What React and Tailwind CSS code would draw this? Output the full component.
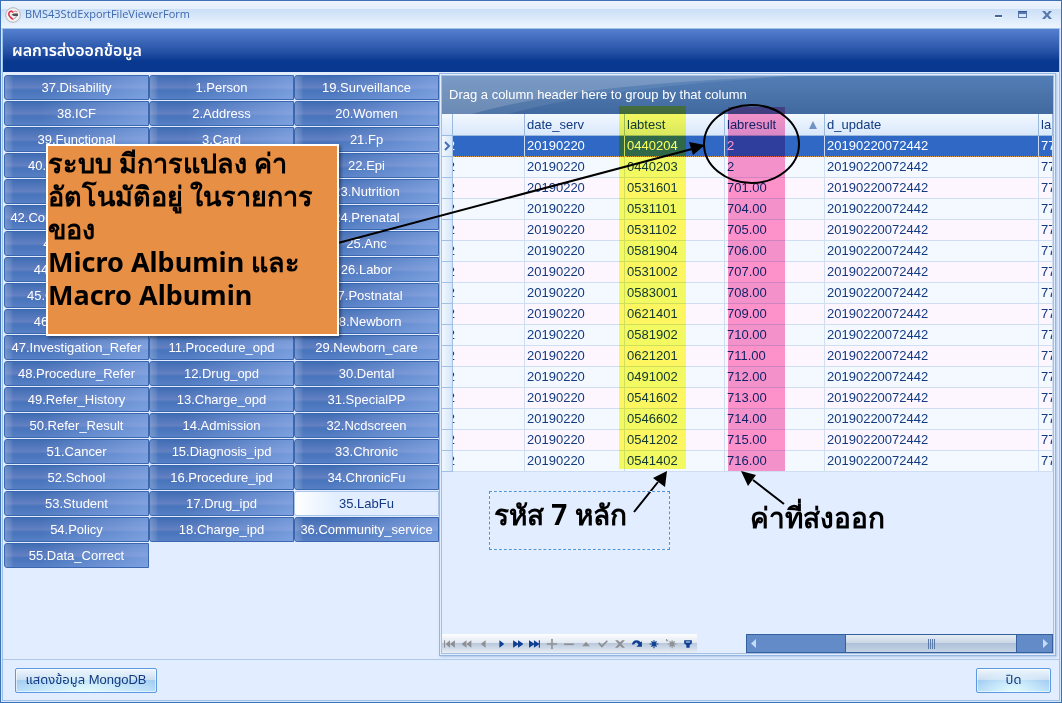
import React from "react";

const columns = [
  [
    "37.Disability", "38.ICF", "39.Functional", "40.Rehabilitation", "41.Village",
    "42.Community_Activity", "43.Provider", "44.Care_Refer", "45.Clinical_Refer",
    "46.Drug_Refer", "47.Investigation_Refer", "48.Procedure_Refer", "49.Refer_History",
    "50.Refer_Result", "51.Cancer", "52.School", "53.Student", "54.Policy", "55.Data_Correct",
  ],
  [
    "1.Person", "2.Address", "3.Card", "4.Death", "5.Drugallergy", "6.Home", "7.Village",
    "8.Service", "9.Appointment", "10.Diagnosis_opd", "11.Procedure_opd", "12.Drug_opd",
    "13.Charge_opd", "14.Admission", "15.Diagnosis_ipd", "16.Procedure_ipd", "17.Drug_ipd",
    "18.Charge_ipd",
  ],
  [
    "19.Surveillance", "20.Women", "21.Fp", "22.Epi", "23.Nutrition", "24.Prenatal", "25.Anc",
    "26.Labor", "27.Postnatal", "28.Newborn", "29.Newborn_care", "30.Dental", "31.SpecialPP",
    "32.Ncdscreen", "33.Chronic", "34.ChronicFu", "35.LabFu", "36.Community_service",
  ],
];

const rows = [
  ["0440204", "2"], ["0440203", "2"], ["0531601", "701.00"], ["0531101", "704.00"],
  ["0531102", "705.00"], ["0581904", "706.00"], ["0531002", "707.00"], ["0583001", "708.00"],
  ["0621401", "709.00"], ["0581902", "710.00"], ["0621201", "711.00"], ["0491002", "712.00"],
  ["0541602", "713.00"], ["0546602", "714.00"], ["0541202", "715.00"], ["0541402", "716.00"],
];

const navIcons = [
  ["First record", false, <path d="M0 2h1v7H0zM5.500 2v7L2 6V5zM10 2v7L6 6V5z" />],
  ["Previous page", false, <path d="M5 2v7L1 6V5zM9.500 2v7L5.500 6V5z" />],
  ["Previous record", false, <path d="M7 2v7L3 6V5z" />],
  ["Next record", true, <path d="M4 2v7L8 6V5z" />],
  ["Next page", true, <path d="M1 2v7L5.500 6V5zM5.500 2v7L10 6V5z" />],
  ["Last record", true, <path d="M0 2v7L4.500 6V5zM4.500 2v7L9 6V5zM9 2h1v7H9z" />],
  ["Insert", false, <path d="M1 5h4V1h1v4h4v1H6v4H5V6H1z" stroke="#8e9093" strokeWidth=".5" />],
  ["Delete", false, <path d="M1 5h9v1.500H1z" />],
  ["Edit", false, <path d="M2 7.500L5.500 3.500 9 7.500z" />],
  ["Post", false, <path d="M1 5l1-1 2.500 2.500L9 2l1 1-5.500 6z" />],
  ["Cancel", false, <path d="M1 2h2.500l2 2 2-2H10L6.800 5.500 10 9H7.500l-2-2-2 2H1l3.200-3.500z" />],
  ["Refresh", true, <path d="M1 6C1 1 8 1 8.500 4L10 3v5H5l1.800-1.700C6 3.500 3.500 4 3 6z" />],
  ["Save bookmark", true, <path d="M5 2h1v2l1.500-1.200.7.700L7 5h2.500v1H7l1.200 1.500-.7.700L6 7v2.500H5V7L3.500 8.200l-.7-.7L4 6H1.500V5H4L2.800 3.500l.7-.7L5 4z" />],
  ["Go to bookmark", false, <path d="M1 1h1v1h1v1H1zM6 2h1v2l1.500-1.200.7.700L8 5h2.500v1H8l1.200 1.500-.7.700L7 7v2.500H6V7L4.500 8.200l-.7-.7L5 6H2.500V5H5L3.800 3.500l.7-.7L6 4z" />],
  ["Filter", true, <path fillRule="evenodd" d="M2 2h7v3L7 6.500V9H4V6.500L2 5zM3.500 3.200v1h4v-1z" />],
];

function Tab({ name }) {
  const selected = name === "35.LabFu";
  return (
    <button
      type="button"
      aria-pressed={selected}
      className={
        "h-[25px] shrink-0 overflow-hidden whitespace-nowrap rounded-l-[3px] border pt-px text-center text-[13px] leading-[22px] " +
        (selected
          ? "border-[#a9c5e8] bg-linear-to-r from-white to-[#e2eeff] to-30% text-[#123a80]"
          : "border-[#3a67af] bg-[linear-gradient(90deg,#ffffff38_0,#ffffff18_4%,transparent_6%,transparent_25%,#aac8ff78_100%),linear-gradient(180deg,#406db4_0%,#6280c2_50%,#4874bc_62%,#567fc4_100%)] text-white")
      }
    >
      {name}
    </button>
  );
}

function TitleBar() {
  return (
    <div className="flex h-[27px] shrink-0 items-center bg-[linear-gradient(180deg,#edf4fe_0,#e4effc_8px,#cbdff7_8px,#edf5fe_100%)] pl-1 pr-2">
      <svg viewBox="0 0 16 16" className="size-4" aria-hidden="true">
        <circle cx="8" cy="8" r="7.300" fill="#f3f3f4" stroke="#b4b4b8" />
        <path d="M8 5.500C6.500 3 3.500 4.500 3.800 7.500c.2 2 1.700 3 4.200 5" fill="none" stroke="#e0304a" strokeWidth="1.600" />
        <path d="M8 5.500C9 4 11 3.800 12 5" fill="none" stroke="#e58a98" strokeWidth="1.200" />
        <path d="M8 12.500C10 11 11.500 10 12 8.500" fill="none" stroke="#b0b0b4" strokeWidth="1.200" />
        <path d="M6.500 8l2-1.500H13v2.500H9z" fill="#4f4f55" />
      </svg>
      <span className="ml-1 grow font-['Open_Sans',sans-serif] text-[11px] text-[#3d69ad]">BMS43StdExportFileViewerForm</span>
      <div className="flex items-center gap-3">
        <button type="button" aria-label="Minimize" className="h-3 w-3">
          <svg viewBox="0 0 12 12" className="size-3"><path d="M2 6h7v2H2z" fill="#45679d" /><path d="M2 8h7v1H2z" fill="#fff" /></svg>
        </button>
        <button type="button" aria-label="Maximize" className="h-3 w-3">
          <svg viewBox="0 0 12 12" className="size-3"><path fillRule="evenodd" d="M1 2h9v7H1zM2 5v3h7V5z" fill="#5678ac" /><path d="M1 2h9v1H1z" fill="#35568e" /></svg>
        </button>
        <button type="button" aria-label="Close" className="h-3 w-3">
          <svg viewBox="0 0 12 12" className="size-3"><path d="M1 2h3l2 2.500L8 2h3L7.500 6 11 10H8L6 7.500 4 10H1l3.500-4z" fill="#5678ac" /></svg>
        </button>
      </div>
    </div>
  );
}

function HeadCell({ children, label }) {
  return (
    <th scope="col" aria-label={label} className="overflow-hidden whitespace-nowrap border-b border-r border-[#9bb9dd] bg-linear-to-b from-[#f2f8ff] to-[#d9e8fb] pl-0.5 text-left font-normal">
      {children}
    </th>
  );
}

function DataTable() {
  return (
    <table className="w-full table-fixed border-separate border-spacing-0 text-[13px] leading-5 text-[#123a80]">
      <colgroup>
        <col className="w-[11px]" />
        <col className="w-[72px]" />
        <col className="w-[100px]" />
        <col className="w-[100px]" />
        <col className="w-[100px]" />
        <col className="w-[214px]" />
        <col />
      </colgroup>
      <thead>
        <tr className="h-[22px]">
          <HeadCell label="Row indicator" />
          <HeadCell label="Key" />
          <HeadCell>date_serv</HeadCell>
          <HeadCell>labtest</HeadCell>
          <HeadCell>
            <span className="flex items-center justify-between pr-[7px]">
              labresult
              <svg viewBox="0 0 8 8" className="size-2"><path d="M4 0l4 8H0z" fill="#6f93c2" /></svg>
            </span>
          </HeadCell>
          <HeadCell>d_update</HeadCell>
          <HeadCell>la</HeadCell>
        </tr>
      </thead>
      <tbody>
        {rows.map(([code, value], i) => {
          const cell =
            "overflow-hidden whitespace-nowrap border-r border-b p-0 pl-0.5 " +
            (i === 0
              ? "border-r-[#c9dcf3] border-b-[#e0a050] [border-bottom-style:dotted] bg-[#2f69c5] text-white"
              : i % 2
                ? "border-[#cfdff1] bg-[#f3f9ff]"
                : "border-[#cfdff1] bg-[#fdf6ff]");
          return (
            <tr key={code} className="h-[21px]">
              <td className="border-b border-r border-[#a3bfe1] bg-linear-to-r from-[#f2f8ff] to-[#d5e6fa] p-0">
                {i === 0 && (
                  <svg viewBox="0 0 10 12" className="h-3 w-2.5"><path d="M3 2l4 4-4 4" fill="none" stroke="#4671b0" strokeWidth="2" /></svg>
                )}
              </td>
              <td className={cell + " pl-0!"}>
                <span className="flex w-0.5 justify-end overflow-hidden">2</span>
              </td>
              <td className={cell}>20190220</td>
              <td className={cell}>{code}</td>
              <td className={cell}>{value}</td>
              <td className={cell}>20190220072442</td>
              <td className={cell}>77</td>
            </tr>
          );
        })}
      </tbody>
    </table>
  );
}

function GridFooter() {
  return (
    <div className="flex h-[19px] shrink-0 items-stretch">
      <div className="flex w-[255px] items-center bg-[linear-gradient(180deg,#fdfefe_0%,#dfe7f0_50%,#b9c8dc_50%,#e9eef5_100%)]">
        {navIcons.map(([label, active, shape]) => (
          <button key={label} type="button" aria-label={label} className="flex h-4 w-[17px] items-center">
            <svg viewBox="0 0 11 11" className={"ml-0.5 size-3 " + (active ? "fill-[#0e3f93]" : "fill-[#8e9093]")}>{shape}</svg>
          </button>
        ))}
      </div>
      <div className="w-[49px]" />
      <div className="flex grow border border-[#34609f] bg-[#628bc7]">
        <button type="button" aria-label="Scroll left" className="flex w-[98px] items-center pl-1">
          <svg viewBox="0 0 5 9" className="h-[9px] w-[5px]"><path d="M5 0v9L0 4.500z" fill="#c4dcfa" /></svg>
        </button>
        <div className="flex grow items-center justify-center gap-px border-x border-[#34609f] bg-[linear-gradient(180deg,#e6ecf3_0%,#c8d5e5_50%,#aec0d8_50%,#c5d3e5_100%)]">
          {[0, 1, 2, 3].map((n) => <span key={n} className="h-2.5 w-px bg-[#5d7ba8]" />)}
        </div>
        <button type="button" aria-label="Scroll right" className="flex w-[35px] items-center justify-end pr-1">
          <svg viewBox="0 0 5 9" className="h-[9px] w-[5px]"><path d="M0 0v9l5-4.500z" fill="#c4dcfa" /></svg>
        </button>
      </div>
    </div>
  );
}

function Annotations() {
  return (
    <div className="pointer-events-none absolute -inset-px overflow-hidden font-['Noto_Sans','DejaVu_Sans',sans-serif] font-bold text-black">
      <div className="absolute left-[619px] top-[106px] h-[363px] w-[67px] bg-[#ffff60] mix-blend-multiply" />
      <div className="absolute left-[728px] top-[107px] h-[364px] w-[57px] bg-[#ff96ca] mix-blend-multiply" />
      <svg width="1062" height="703" className="absolute left-0 top-0 max-w-none">
        <g stroke="#000" strokeWidth="2" fill="none">
          <ellipse cx="751.500" cy="144" rx="47.500" ry="39" />
          <path d="M338 243L692 149M634 512l24-30M784 504l-31-24" />
        </g>
        <path d="M705 145l-12 10-4-13zM667 471l-2 16-12-9zM741 471l15 4-8 11z" fill="#000" />
      </svg>
      <p className="absolute left-[46px] top-[144px] h-[192px] w-[293px] whitespace-nowrap border-2 border-white bg-[#e68f45] text-[27px] leading-[33px] shadow-[2px_2px_3px_#0006]">
        ระบบ มีการแปลง ค่า<br />อัตโนมัติอยู่ ในรายการ<br />ของ<br />Micro Albumin และ<br />Macro Albumin
      </p>
      <p className="absolute left-[489px] top-[491px] h-[59px] w-[181px] whitespace-nowrap border border-white pl-1 text-[28px] leading-[44px] outline-1 -outline-offset-1 outline-dashed outline-[#4b93dd]">
        รหัส 7 หลัก
      </p>
      <p className="absolute left-[750px] top-[500px] whitespace-nowrap text-[28px] leading-[34px]">ค่าที่ส่งออก</p>
    </div>
  );
}

const footButton =
  "h-[25px] rounded-xs border border-[#5b9ae0] bg-[radial-gradient(ellipse_at_50%_100%,#e2fbff_0%,transparent_75%),linear-gradient(180deg,#eff6fd_0%,#c9ddf2_50%,#a4cdf2_50%,#b6dcf8_100%)] text-[13px] text-[#123a80] shadow-[inset_0_0_0_1px_#ffffff90]";

export default function App() {
  return (
    <div className="relative flex h-screen flex-col border border-[#3d70b5] bg-[#d6e6fa] font-['Liberation_Sans','Noto_Sans_Thai',sans-serif]">
      <TitleBar />
      <div className="mx-px mb-px flex min-h-0 grow flex-col border border-[#9fc1ea] bg-[#e2eeff]">
        <h1 className="h-[43px] shrink-0 bg-linear-to-b from-[#5580cf] via-[#2854a8] via-50% to-[#083890] to-75% pl-[9px] text-[16px] font-semibold leading-[43px] text-white">
          ผลการส่งออกข้อมูล
        </h1>
        <main className="flex min-h-0 grow">
          <nav aria-label="Files" className="flex w-[436px] shrink-0 pl-px pt-[3px]">
            {columns.map((names) => (
              <div key={names[0]} className="flex min-w-0 flex-1 flex-col gap-px">
                {names.map((name) => <Tab key={name} name={name} />)}
              </div>
            ))}
          </nav>
          <section className="mr-[3px] mt-px flex min-w-0 grow flex-col border border-[#94b6e2] bg-[#e2eeff] p-px shadow-[1px_1px_2px_#7c9ccb80]">
            <div className="flex min-h-0 grow flex-col overflow-hidden border border-[#a7c0e0]">
              <div className="relative flex h-[38px] shrink-0 items-center bg-linear-to-b from-[#537eb5] to-[#41699f] pl-[7px] text-[13px] text-white">
                <svg viewBox="0 0 612 38" preserveAspectRatio="none" className="absolute inset-0 h-full w-full" aria-hidden="true">
                  <path d="M0 0H350C200 6 110 16 30 38H0z" fill="#fff" opacity=".16" />
                  <path d="M0 0H350C230 8 140 18 66 38H0z" fill="#fff" opacity=".08" />
                </svg>
                <span className="relative">Drag a column header here to group by that column</span>
              </div>
              <div className="min-h-0 grow overflow-hidden">
                <DataTable />
              </div>
              <GridFooter />
            </div>
          </section>
        </main>
        <footer className="mt-[3px] flex h-[41px] shrink-0 items-center justify-between border-t border-[#adc9ee] pl-3 pr-2">
          <button type="button" className={footButton + " w-[142px]"}>แสดงข้อมูล MongoDB</button>
          <button type="button" className={footButton + " w-[75px]"}>ปิด</button>
        </footer>
      </div>
      <Annotations />
    </div>
  );
}
